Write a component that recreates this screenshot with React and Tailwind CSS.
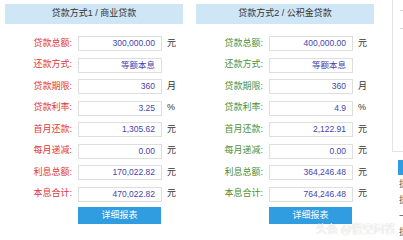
import React from 'react';

const loans = [
  {
    title: '贷款方式1 / 商业贷款',
    labelColor: 'text-[#e0363c]',
    rows: [
      ['贷款总额:', '300,000.00', '元'],
      ['还款方式:', '等额本息', ''],
      ['贷款期限:', '360', '月'],
      ['贷款利率:', '3.25', '%'],
      ['首月还款:', '1,305.62', '元'],
      ['每月递减:', '0.00', '元'],
      ['利息总额:', '170,022.82', '元'],
      ['本息合计:', '470,022.82', '元'],
    ],
  },
  {
    title: '贷款方式2 / 公积金贷款',
    labelColor: 'text-[#4f8f32]',
    rows: [
      ['贷款总额:', '400,000.00', '元'],
      ['还款方式:', '等额本息', ''],
      ['贷款期限:', '360', '月'],
      ['贷款利率:', '4.9', '%'],
      ['首月还款:', '2,122.91', '元'],
      ['每月递减:', '0.00', '元'],
      ['利息总额:', '364,246.48', '元'],
      ['本息合计:', '764,246.48', '元'],
    ],
  },
];

const font = { fontFamily: '"Liberation Sans", "Noto Sans CJK SC", sans-serif' };

const LoanPanel = ({ loan }) => (
  <div className="w-[178px] shrink-0 flex flex-col">
    <div className="mt-[4px] h-[20px] bg-[#cfe6f7] flex items-center justify-center text-[9px] text-[#333]">
      {loan.title}
    </div>
    <div className="mt-[12px] flex flex-col gap-[6.5px]">
      {loan.rows.map(([label, value, unit]) => (
        <div key={label} className="flex items-center h-[15px]">
          <span className={`w-[67px] text-right text-[9px] ${loan.labelColor}`}>{label}</span>
          <div className="ml-[6px] w-[84px] h-[15px] border border-[#dedede] bg-white flex items-center justify-end pr-[6px] text-[8.5px] text-[#4444b0]">
            {value}
          </div>
          <span className="ml-[5px] text-[9px] text-[#333]">{unit}</span>
        </div>
      ))}
    </div>
    <button className="mt-[5.5px] ml-[73px] w-[83px] h-[17px] bg-[#2f9de0] text-white text-[9px] flex items-center justify-center">
      详细报表
    </button>
  </div>
);

export default function App() {
  return (
    <div className="relative w-[403px] h-[240px] overflow-hidden bg-white flex" style={font}>
      <div className="flex pl-[5px] gap-[13px]">
        {loans.map((loan) => (
          <LoanPanel key={loan.title} loan={loan} />
        ))}
      </div>
      <div className="ml-[18px] w-[11px] shrink-0 flex flex-col overflow-hidden">
        <div className="h-[152px] border-l border-b border-[#e3e3e3] relative">
          <div className="absolute left-[7px] top-[10px] w-[4px] border-t border-[#d8d8d8]" />
          <div className="absolute left-[7px] top-[28px] w-[4px] border-t border-[#d8d8d8]" />
        </div>
        <div className="mt-[8px] ml-[6px] h-[15px] bg-[#2f9de0]" />
        <div className="ml-[7px] mt-[4px] flex flex-col gap-[5px] text-[9px] leading-[11px] text-[#555] whitespace-nowrap">
          <span>提</span>
          <span>提</span>
          <span>一</span>
          <span>提</span>
        </div>
      </div>
      <div className="absolute left-[316px] top-[220px] flex items-center gap-[3px] text-[11px] text-white [text-shadow:0_0_1px_rgba(0,0,0,0.3)]" style={{ fontFamily: '"Noto Sans CJK SC", sans-serif' }}>
        <span>头条</span>
        <span>@悟空问答</span>
      </div>
    </div>
  );
}
